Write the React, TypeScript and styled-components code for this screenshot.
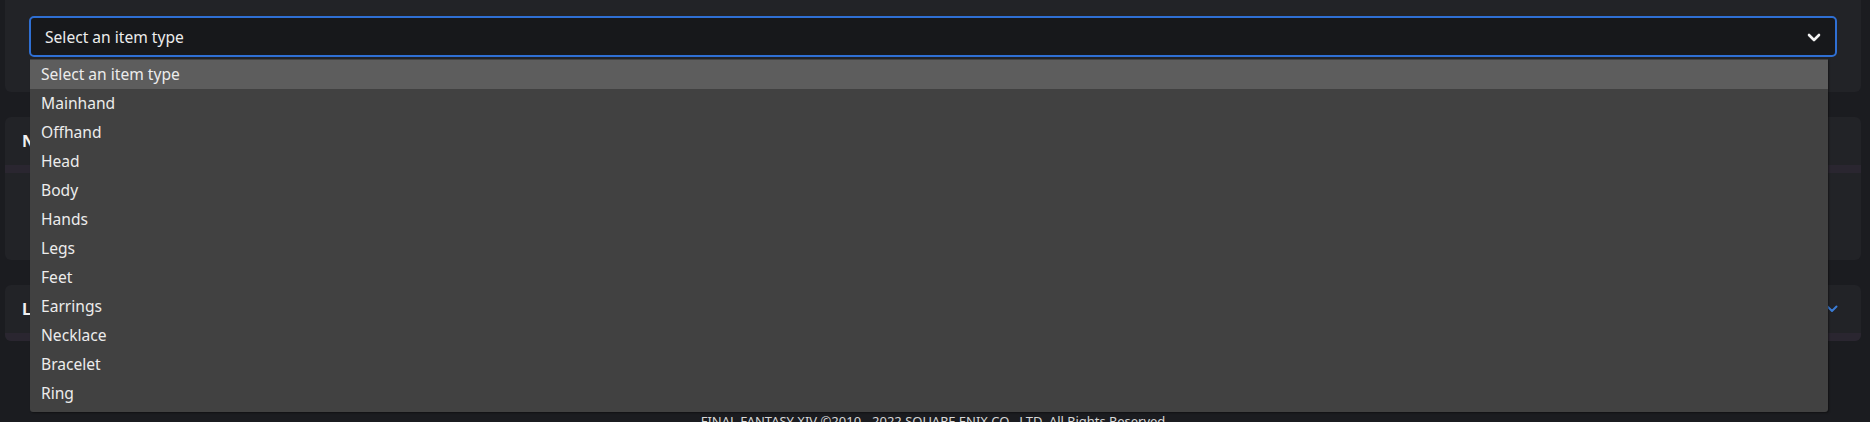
import styled, { createGlobalStyle } from "styled-components";
import { useState } from "react";

const itemTypes = [
  "Select an item type",
  "Mainhand",
  "Offhand",
  "Head",
  "Body",
  "Hands",
  "Legs",
  "Feet",
  "Earrings",
  "Necklace",
  "Bracelet",
  "Ring",
];

const GlobalStyle = createGlobalStyle`
  body {
    margin: 0;
    background: #1b1c20;
    color: #e6e6e6;
    font-family: "Noto Sans", "Open Sans", sans-serif;
  }
`;

const App = () => {
  const [selected, setSelected] = useState(0);

  return (
    <>
      <GlobalStyle />
      <Page>
        <FilterCard>
          <SelectWrap>
            <SelectBox>
              <SelectText>{itemTypes[0]}</SelectText>
              <svg width="14" height="9" viewBox="0 0 14 9">
                <path
                  d="M2 2 L7 7 L12 2"
                  fill="none"
                  stroke="#f2f2f2"
                  strokeWidth="2.6"
                  strokeLinecap="round"
                  strokeLinejoin="round"
                />
              </svg>
            </SelectBox>
            <OptionList>
              {itemTypes.map((t, i) => (
                <Option key={t} $active={i === selected} onMouseEnter={() => setSelected(i)}>
                  {t}
                </Option>
              ))}
            </OptionList>
          </SelectWrap>
        </FilterCard>

        <Card>
          <CardHeader>Name</CardHeader>
          <Strip />
          <CardBody />
        </Card>

        <Card>
          <CardHeader>
            Language
            <svg width="12" height="8" viewBox="0 0 12 8">
              <path
                d="M1.5 1.5 L6 6 L10.5 1.5"
                fill="none"
                stroke="#3a7bd5"
                strokeWidth="2"
                strokeLinecap="round"
                strokeLinejoin="round"
              />
            </svg>
          </CardHeader>
          <Strip />
        </Card>

        <Footer>FINAL FANTASY XIV ©2010 - 2022 SQUARE ENIX CO., LTD. All Rights Reserved</Footer>
      </Page>
    </>
  );
};

const Page = styled.div`
  display: flex;
  flex-direction: column;
  gap: 25px;
  padding: 0 9px 0 5px;
`;

const FilterCard = styled.div`
  background: #222327;
  border-radius: 0 0 6px 6px;
  padding: 16px 24px 35px;
`;

const SelectWrap = styled.div`
  position: relative;
`;

const SelectBox = styled.div`
  height: 41px;
  box-sizing: border-box;
  display: flex;
  align-items: center;
  justify-content: space-between;
  padding: 0 14px 0 14px;
  background: #17181b;
  border: 2px solid #2f6fd3;
  border-radius: 5px;
  svg {
    margin-top: 1px;
  }
`;

const SelectText = styled.span`
  font-size: 15.6px;
  color: #ececec;
`;

const OptionList = styled.ul`
  position: absolute;
  top: 100%;
  left: 1px;
  right: 9px;
  margin: 2px 0 0;
  padding: 1px 0 4px;
  list-style: none;
  background: #414141;
  border-radius: 0 0 3px 3px;
  box-shadow: 1px 1px 2px rgba(0, 0, 0, 0.4);
  z-index: 10;
`;

const Option = styled.li<{ $active: boolean }>`
  height: 29px;
  line-height: 29px;
  padding: 0 11px;
  font-size: 15.6px;
  color: #ececec;
  background: ${(p) => (p.$active ? "#5d5d5d" : "transparent")};
`;

const Card = styled.div`
  background: #222327;
  border-radius: 6px;
  overflow: hidden;
`;

const CardHeader = styled.div`
  height: 48px;
  display: flex;
  align-items: center;
  justify-content: space-between;
  padding: 0 23px 0 17px;
  font-size: 16px;
  font-weight: 700;
  color: #f0f0f0;
`;

const Strip = styled.div`
  height: 8px;
  background: #2a2630;
`;

const CardBody = styled.div`
  height: 87px;
`;

const Footer = styled.div`
  margin-top: 46px;
  text-align: center;
  font-size: 13px;
  color: #d8d8d8;
`;

export default App;
